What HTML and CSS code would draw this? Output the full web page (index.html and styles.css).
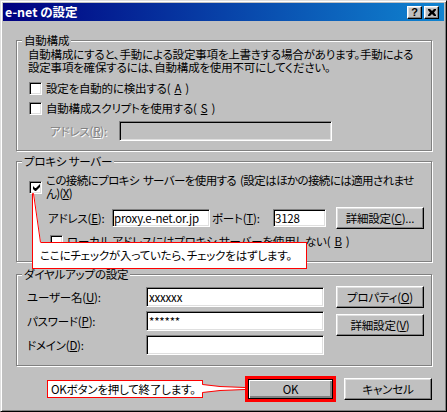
FILE: index.html
```html
<!DOCTYPE html>
<html lang="ja">
<head>
  <meta charset="UTF-8">
  <title>e-net の設定</title>
  <link rel="stylesheet" href="styles.css">
</head>
<body>
  <div class="window">
    <!-- タイトルバー -->
    <div class="titlebar">
      <span class="title">e-net の設定</span>
      <div class="cap-btns">
        <span class="cap-btn">?</span>
        <span class="cap-btn">
          <svg width="8" height="7" viewBox="0 0 8 7"><path d="M0 0h2l2 2 2-2h2v1l-2 2.5 2 2.5v1h-2l-2-2-2 2h-2v-1l2-2.5-2-2.5z" fill="#000"/></svg>
        </span>
      </div>
    </div>

    <div class="content">
      <!-- 自動構成 -->
      <fieldset class="group group-auto">
        <legend>自動構成</legend>
        <p class="desc">自動構成にすると、手動による設定事項を上書きする場合があります。手動による<br>設定事項を確保するには、自動構成を使用不可にしてください。</p>
        <label class="check first"><span class="box"></span>設定を自動的に検出する(<u>A</u>)</label>
        <label class="check"><span class="box"></span>自動構成スクリプトを使用する(<u>S</u>)</label>
        <div class="row script-row">
          <span class="label disabled">アドレス(<u>R</u>):</span>
          <input class="edit edit-disabled" type="text" disabled>
        </div>
      </fieldset>

      <!-- プロキシ サーバー -->
      <fieldset class="group group-proxy">
        <legend>プロキシ&nbsp;サーバー</legend>
        <label class="check two-line"><span class="box checked"><svg width="9" height="9" viewBox="0 0 9 9"><path d="M1 3v3l2 2h1l4-4v-3l-4 4h-1z" fill="#000"/></svg></span><span class="long-label">この接続にプロキシ サーバーを使用する (設定はほかの接続には適用されませ<br>ん)(<u>X</u>)</span></label>
        <div class="row proxy-row">
          <span class="label addr-label">アドレス(<u>E</u>):</span>
          <input class="edit addr-edit" type="text" value="proxy.e-net.or.jp">
          <span class="label port-label">ポート(<u>T</u>):</span>
          <input class="edit port-edit" type="text" value="3128">
          <button class="btn push-right">詳細設定(<u>C</u>)...</button>
        </div>
        <label class="check local"><span class="box"></span>ローカル アドレスにはプロキシ サーバーを使用しない(<u>B</u>)</label>
      </fieldset>

      <!-- ダイヤルアップの設定 -->
      <fieldset class="group group-dial">
        <legend>ダイヤルアップの設定</legend>
        <div class="dial">
          <div class="dial-fields">
            <div class="row">
              <span class="label dial-label">ユーザー名(<u>U</u>):</span>
              <input class="edit dial-edit" type="text" value="xxxxxx">
            </div>
            <div class="row">
              <span class="label dial-label">パスワード(<u>P</u>):</span>
              <input class="edit dial-edit" type="text" value="******">
            </div>
            <div class="row">
              <span class="label dial-label">ドメイン(<u>D</u>):</span>
              <input class="edit dial-edit" type="text">
            </div>
          </div>
          <div class="dial-buttons">
            <button class="btn">プロパティ(<u>O</u>)</button>
            <button class="btn">詳細設定(<u>V</u>)</button>
          </div>
        </div>
      </fieldset>

      <div class="footer">
        <button class="btn btn-ok">OK</button>
        <button class="btn btn-cancel">キャンセル</button>
      </div>
    </div>

    <!-- 説明の吹き出し -->
    <div class="callout callout-check">ここにチェックが入っていたら、チェックをはずします。</div>
    <svg class="tail tail-check" width="12" height="52" viewBox="0 0 12 52">
      <polygon points="2,1 4,1 11,51 3,51" fill="#fff"/>
      <polyline points="2.5,52 2.5,1.5 3.5,1.5 10.5,50.5" fill="none" stroke="#ff0000"/>
    </svg>

    <div class="callout callout-ok">OKボタンを押して終了します。</div>
    <svg class="tail tail-ok" width="45" height="14" viewBox="0 0 45 14">
      <polygon points="0,2.5 19,4.5 44,5.5 44,7.5 19,8.5 0,10.5" fill="#fff"/>
      <polyline points="1.5,2.5 19,4.5 44,5.5" fill="none" stroke="#ff0000"/>
      <polyline points="1.5,10.5 19,8.5 44,7.5" fill="none" stroke="#ff0000"/>
    </svg>
  </div>
</body>
</html>
```

FILE: styles.css
```css
body {
  margin: 0;
  background: #c0c0c0;
  font-family: "Noto Sans CJK JP", sans-serif;
  font-size: 11.5px;
  letter-spacing: -0.2px;
  font-feature-settings: "palt";
  color: #000;
}

/* ウィンドウ枠 */
.window {
  position: relative;
  width: 447px;
  height: 412px;
  box-sizing: border-box;
  padding: 2px;
  border: 1px solid;
  border-color: #dfdfdf #000 #000 #dfdfdf;
  box-shadow: inset 1px 1px #fff, inset -1px -1px #808080;
}

/* タイトルバー */
.titlebar {
  height: 18px;
  display: flex;
  align-items: center;
  justify-content: space-between;
  padding: 0 5px 0 2px;
  background: linear-gradient(to right, #000080, #1084d0);
  color: #fff;
}

.title {
  font-weight: bold;
  font-size: 12.5px;
  letter-spacing: 0;
  line-height: 18px;
}

.cap-btns {
  display: flex;
  gap: 2px;
  margin-top: 1px;
}

.cap-btn {
  width: 15px;
  height: 13px;
  box-sizing: border-box;
  display: flex;
  align-items: center;
  justify-content: center;
  background: #c0c0c0;
  border: 1px solid;
  border-color: #fff #000 #000 #fff;
  box-shadow: inset -1px -1px #808080, inset 1px 1px #dfdfdf;
  color: #000;
  font-family: "Liberation Sans", sans-serif;
  font-weight: bold;
  font-size: 11px;
  line-height: 11px;
}

.content {
  padding: 13px 12px 0 13px;
}

/* グループボックス */
.group {
  margin: 0;
  min-width: 0;
  padding: 1px 7px 9px 11px;
  border: 1px solid #808080;
  box-shadow: inset 1px 1px #fff, 1px 1px #fff;
}

.group legend {
  margin-left: -6px;
  padding: 0 2px;
  line-height: 13px;
  background: #c0c0c0;
}

.group-proxy {
  margin-top: 4px;
  padding-top: 6px;
  padding-bottom: 10px;
}

.group-dial {
  margin-top: 6px;
  padding-top: 5px;
  padding-bottom: 10px;
}

.desc {
  margin: 0;
  line-height: 13px;
  white-space: nowrap;
}

/* チェックボックス */
.check {
  display: flex;
  align-items: center;
  gap: 4px;
  height: 20px;
  line-height: 13px;
  white-space: nowrap;
}

.check.first {
  margin-top: 4px;
}

.check.two-line {
  height: 26px;
}

.long-label {
  letter-spacing: -0.6px;
  word-spacing: 2px;
}

.check.local {
  margin-top: 2px;
  margin-left: 22px;
}

.box {
  width: 13px;
  height: 13px;
  box-sizing: border-box;
  flex: none;
  display: flex;
  align-items: center;
  justify-content: center;
  margin-left: 1px;
  background: #fff;
  border: 1px solid;
  border-color: #808080 #fff #fff #808080;
  box-shadow: inset 1px 1px #000, inset -1px -1px #dfdfdf;
}

.check.local .box {
  margin-left: 0;
}

.box svg {
  margin: 1px 0 0 1px;
}

/* 行 */
.row {
  display: flex;
  align-items: center;
  white-space: nowrap;
}

.label {
  flex: none;
}

.disabled {
  color: #808080;
  text-shadow: 1px 1px 0 #fff;
}

.script-row {
  margin-top: 3px;
  height: 20px;
}

.script-row .label {
  width: 69px;
  margin-left: 22px;
}

.proxy-row {
  margin-top: 7px;
  height: 22px;
}

.addr-label {
  width: 64px;
  margin-left: 20px;
}

.port-label {
  width: 61px;
  margin-left: 2px;
}

/* テキストボックス */
.edit {
  box-sizing: border-box;
  height: 20px;
  margin: 0;
  padding: 0 2px;
  background: #fff;
  border: 1px solid;
  border-color: #808080 #fff #fff #808080;
  box-shadow: inset 1px 1px #000, inset -1px -1px #dfdfdf;
  font: inherit;
  letter-spacing: inherit;
  color: #000;
  outline: none;
}

.edit-disabled {
  width: 213px;
  background: #c0c0c0;
}

.addr-edit {
  width: 98px;
  height: 18px;
  padding: 0 1px;
}

.port-edit {
  width: 53px;
  height: 18px;
  padding: 0 1px;
}

/* ボタン */
.btn {
  box-sizing: border-box;
  width: 88px;
  height: 22px;
  margin: 0;
  padding: 0;
  background: #c0c0c0;
  border: 1px solid;
  border-color: #fff #000 #000 #fff;
  box-shadow: inset -1px -1px #808080, inset 1px 1px #dfdfdf;
  font: inherit;
  letter-spacing: inherit;
  color: #000;
  white-space: nowrap;
}

.push-right {
  margin-left: auto;
}

/* ダイヤルアップ */
.dial {
  display: flex;
}

.dial-fields {
  display: flex;
  flex-direction: column;
  gap: 4px;
  margin-top: 1px;
}

.dial-label {
  width: 119px;
  margin-left: -1px;
}

.dial-edit {
  width: 178px;
}

.dial-buttons {
  display: flex;
  flex-direction: column;
  gap: 6px;
  margin-left: auto;
}

/* OK / キャンセル */
.footer {
  display: flex;
  align-items: center;
  justify-content: flex-end;
  gap: 11px;
  margin-top: 12px;
  height: 22px;
}

.btn-ok {
  width: 85px;
  height: 20px;
  border: 1px solid #000;
  box-shadow: inset 1px 1px #fff, inset -1px -1px #808080, inset -2px -2px #808080;
  outline: 3px solid #ff0000;
}

.btn-cancel {
  width: 88px;
}

/* 吹き出し */
.callout {
  position: absolute;
  box-sizing: border-box;
  background: #fff;
  border: 1px solid #ff0000;
  white-space: nowrap;
}

.callout-check {
  left: 31px;
  top: 241px;
  width: 275px;
  height: 27px;
  padding-left: 7px;
  line-height: 25px;
}

.callout-ok {
  left: 46px;
  top: 379px;
  width: 156px;
  height: 18px;
  padding-left: 3px;
  line-height: 16px;
}

.tail {
  position: absolute;
  display: block;
}

.tail-check {
  left: 29px;
  top: 191px;
}

.tail-ok {
  left: 200px;
  top: 381px;
}
```
